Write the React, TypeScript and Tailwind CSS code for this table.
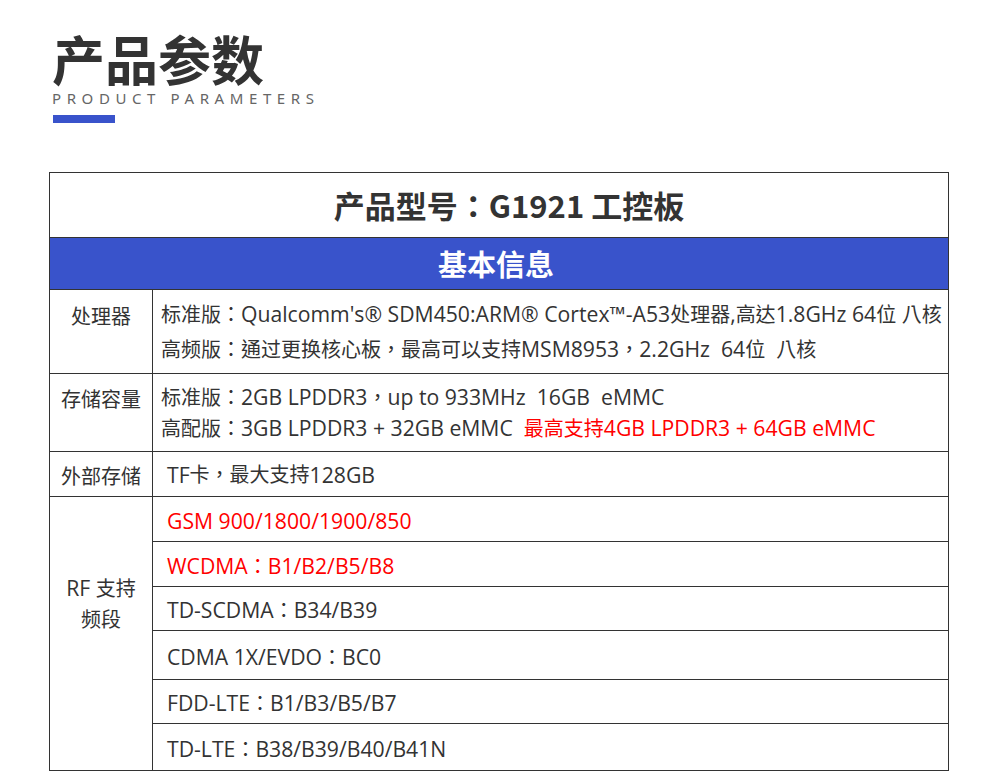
import type { ReactNode } from 'react';

const RED = 'text-[#ff0000]';

// CJK and full-width runs stay at 20px, Latin runs are set a bit larger like the original
function T({ s }: { s: string }) {
  const parts = s.split(/([\u3000-\u303f\u4e00-\u9fff\uff00-\uffef]+)/);
  return (
    <>
      {parts.map((p, i) =>
        i % 2 === 1 ? (
          <span key={i} className="text-[20px]">
            {p}
          </span>
        ) : (
          p
        ),
      )}
    </>
  );
}

function Label({ children, pt }: { children: ReactNode; pt: string }) {
  return (
    <div className={`w-[103px] shrink-0 border-r border-[#333] text-center text-[21.2px] leading-[30px] ${pt}`}>
      {children}
    </div>
  );
}

const rfRows: { text: string; h: string; red?: boolean }[] = [
  { text: 'GSM 900/1800/1900/850', h: 'h-[44px]', red: true },
  { text: 'WCDMA：B1/B2/B5/B8', h: 'h-[45px]', red: true },
  { text: 'TD-SCDMA：B34/B39', h: 'h-[44px]' },
  { text: 'CDMA 1X/EVDO：BC0', h: 'h-[49px]' },
  { text: 'FDD-LTE：B1/B3/B5/B7', h: 'h-[44px]' },
  { text: 'TD-LTE：B38/B39/B40/B41N', h: 'h-[47px]' },
];

export default function App() {
  return (
    <div className="min-h-[779px] w-[1000px] bg-white font-['Open_Sans','Noto_Sans_CJK_TC',sans-serif] text-[#333]">
      <div className="pl-[52px] pt-[30px]">
        <h1 className="font-['Noto_Sans_CJK_SC',sans-serif] text-[53px] font-bold leading-[56px] text-[#333]">产品参数</h1>
        <p className="mt-[3px] font-['Noto_Sans',sans-serif] text-[15px] leading-[18px] tracking-[5.6px] text-[#666]">
          PRODUCT PARAMETERS
        </p>
        <div className="ml-px mt-[8px] h-[8px] w-[62px] bg-[#3953cb]" />
      </div>

      <div className="ml-[49px] mt-[49px] w-[900px] border border-[#333]">
        <div className="flex h-[64px] items-center justify-center pl-[20px] font-['Noto_Sans_CJK_TC',sans-serif] text-[31px] font-bold">
          产品型号：G1921 工控板
        </div>
        <div className="flex h-[52px] items-center justify-center border-t border-[#333] bg-[#3953cb] pr-[6px] font-['Noto_Sans_CJK_SC',sans-serif] text-[29px] font-bold text-white">
          基本信息
        </div>

        <div className="flex h-[84px] border-t border-[#333]">
          <Label pt="pt-[11px]">
            <T s="处理器" />
          </Label>
          <div className="flex flex-1 flex-col justify-center pl-[8px] text-[21.2px] leading-[34px] whitespace-pre">
            <div>
              <T s="标准版：Qualcomm's® SDM450:ARM® Cortex™-A53处理器,高达1.8GHz 64位 八核" />
            </div>
            <div>
              <T s="高频版：通过更换核心板，最高可以支持MSM8953，2.2GHz  64位  八核" />
            </div>
          </div>
        </div>

        <div className="flex h-[78px] border-t border-[#333]">
          <Label pt="pt-[10px]">
            <T s="存储容量" />
          </Label>
          <div className="flex flex-1 flex-col justify-center pl-[8px] text-[21.2px] leading-[30px] whitespace-pre">
            <div>
              <T s="标准版：2GB LPDDR3，up to 933MHz  16GB  eMMC" />
            </div>
            <div>
              <T s="高配版：3GB LPDDR3 + 32GB eMMC  " />
              <span className={RED}>
                <T s="最高支持4GB LPDDR3 + 64GB eMMC" />
              </span>
            </div>
          </div>
        </div>

        <div className="flex h-[45px] border-t border-[#333]">
          <Label pt="pt-[9px]">
            <T s="外部存储" />
          </Label>
          <div className="flex flex-1 items-center pl-[14px] pt-[2px] text-[21.2px]">
            <T s="TF卡，最大支持128GB" />
          </div>
        </div>

        <div className="flex border-t border-[#333]">
          <Label pt="pt-[76px]">
            <T s="RF 支持" />
            <br />
            <T s="频段" />
          </Label>
          <div className="flex-1">
            {rfRows.map((r, i) => (
              <div
                key={r.text}
                className={`flex items-center pl-[14px] pt-[3px] text-[21.2px] ${r.h} ${i > 0 ? 'border-t border-[#333]' : ''} ${r.red ? RED : ''}`}
              >
                <span>
                  <T s={r.text} />
                </span>
              </div>
            ))}
          </div>
        </div>
      </div>
    </div>
  );
}
